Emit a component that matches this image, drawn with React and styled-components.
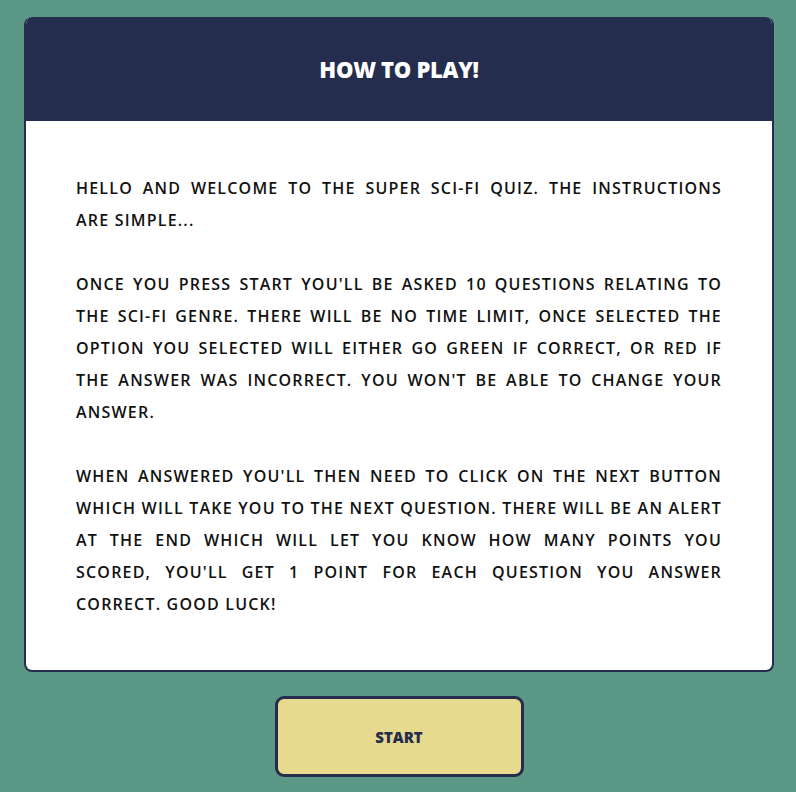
import React from "react";
import styled, { createGlobalStyle } from "styled-components";

const Global = createGlobalStyle`
  html, body { margin: 0; padding: 0; background: #5c9886; }
  body { font-family: "Open Sans", "Noto Sans", sans-serif; }
`;

const Page = styled.div`
  min-height: 792px;
  padding: 17px 22px 0 24px;
  box-sizing: border-box;
  display: flex;
  flex-direction: column;
  align-items: stretch;
`;

const Card = styled.section`
  background: #ffffff;
  border: 2px solid #252d4e;
  border-top: none;
  border-radius: 8px;
  overflow: hidden;
  display: flex;
  flex-direction: column;
`;

const Header = styled.header`
  background: #252d4e;
  height: 104px;
  display: flex;
  align-items: center;
  justify-content: center;
  margin: 0 -2px;
`;

const Title = styled.h1`
  margin: 0;
  color: #ffffff;
  font-family: "Open Sans", sans-serif;
  font-weight: 800;
  font-size: 22px;
  letter-spacing: -0.3px;
`;

const Body = styled.div`
  padding: 51px 50px 50px 50px;
  display: flex;
  flex-direction: column;
  gap: 32px;
`;

const Para = styled.p`
  margin: 0;
  color: #111111;
  font-family: "Open Sans", sans-serif;
  font-weight: 600;
  font-size: 16px;
  line-height: 32px;
  letter-spacing: 1.2px;
  text-transform: uppercase;
  text-align: justify;
`;

const Phrase = styled.span`
  white-space: nowrap;
`;

const Footer = styled.div`
  display: flex;
  justify-content: center;
  padding-top: 24px;
`;

const StartButton = styled.button`
  width: 249px;
  height: 81px;
  background: #e7da8f;
  border: 3px solid #252d4e;
  border-radius: 9px;
  color: #252d4e;
  font-family: "Open Sans", sans-serif;
  font-weight: 800;
  font-size: 15px;
  cursor: pointer;
`;

export default function App() {
  return (
    <>
      <Global />
      <Page>
        <Card>
          <Header>
            <Title>HOW TO PLAY!</Title>
          </Header>
          <Body>
            <Para>
              Hello and welcome to the super sci-fi quiz. The instructions{" "}
              <Phrase>are simple...</Phrase>
            </Para>
            <Para>
              Once you press start you'll be asked 10 questions relating to the sci-fi genre. There will be no time limit, once selected the option you selected will either go green if correct, or red if the answer was incorrect. You won't be able to change your answer.
            </Para>
            <Para>
              When answered you'll then need to click on the next button which will take you to the next question. There will be an alert at the end which will let you know how many points you scored, you'll get 1 point for each question you answer correct. Good luck!
            </Para>
          </Body>
        </Card>
        <Footer>
          <StartButton>START</StartButton>
        </Footer>
      </Page>
    </>
  );
}
